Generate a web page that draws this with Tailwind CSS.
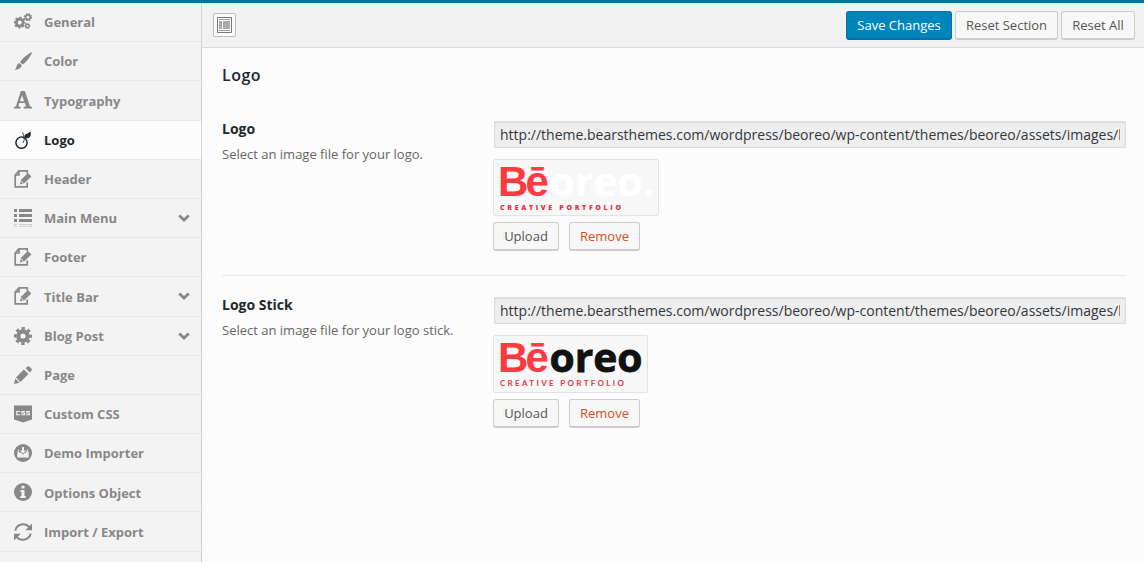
<!DOCTYPE html>
<html lang="en">
<head>
<meta charset="utf-8">
<title>Theme Options</title>
<script src="https://cdn.jsdelivr.net/npm/@tailwindcss/browser@4"></script>
</head>
<body class="h-[562px] overflow-hidden bg-[#fcfcfc] font-['Open_Sans',sans-serif] text-[13px] text-[#555]">
<svg class="hidden">
  <symbol id="edit" viewBox="0 0 18 18"><path d="M13.200 3.500V.9H5L1.200 5V16.900H13.200V12.500M5 1V5H1.200" fill="none" stroke="currentColor" stroke-width="1.700"/><path d="M5.800 14.400L7.300 9.400 14 3 17.400 6.600 10.600 13Z" fill="currentColor"/><path d="M7.400 11.200L9.200 12.800" stroke="#f3f3f3" stroke-width="1"/></symbol>
  <symbol id="chev" viewBox="0 0 12 8"><path d="M1.200 1.400L6 6 10.800 1.400" fill="none" stroke="currentColor" stroke-width="2.800"/></symbol>
</svg>
<div class="flex h-full flex-col border-t-[3px] border-[#0074a2]">
  <div class="flex min-h-0 flex-1">
    <nav class="w-[202px] shrink-0 border-r border-[#d3d3d3] bg-[#f3f3f3] font-bold text-[#888]">
      <a class="flex h-[39.2px] items-center border-b border-[#e7e7e7] pl-[14px]"><svg class="mr-3 size-[18px] shrink-0" viewBox="0 0 18 18" fill="none" stroke="currentColor"><circle cx="5.700" cy="9.600" r="3.400" stroke-width="2.700"/><circle cx="5.700" cy="9.600" r="5.100" stroke-width="1.700" stroke-dasharray="2.300 1.705" stroke-dashoffset="1.150"/><circle cx="13.900" cy="4.200" r="2.300" stroke-width="1.700"/><circle cx="13.900" cy="4.200" r="3.500" stroke-width="1.300" stroke-dasharray="1.600 1.149"/><circle cx="13.400" cy="13" r="1.700" stroke-width="1.400"/><circle cx="13.400" cy="13" r="2.500" stroke-width="1" stroke-dasharray="1.200 .763"/></svg><span class="pt-[2px]">General</span></a>
      <a class="flex h-[39.2px] items-center border-b border-[#e7e7e7] pl-[14px]"><svg class="mr-3 size-[18px] shrink-0" viewBox="0 0 18 18" fill="currentColor"><path d="M17.800 .2C18.200 .9 17 3.200 15 6 13.200 8.500 10.500 11.500 8.600 12.600L6 10.300C7.600 7.600 10.500 4.900 13 3 15.300 1.200 17.200 .1 17.800 .2Z"/><path d="M5.300 11L7.800 13.300C7.300 15.800 4.500 18 .2 18 2 16.800 2.100 15.800 2.600 14.200 3.100 12.600 4 11.300 5.300 11Z"/></svg><span class="pt-px">Color</span></a>
      <a class="flex h-[39.2px] items-center border-b border-[#e7e7e7] pl-[14px]"><svg class="mr-3 size-[18px] shrink-0" viewBox="0 0 18 18" fill="currentColor" fill-rule="evenodd"><path d="M6.900 0H10.900L16 15.200 18 16V17.500H9.700V16L11.900 15.300 10.900 12H5.300L4.400 15.300 6.600 16V17.500H0V16L2 15.200ZM8 4.200L5.900 10.300H10.200Z"/></svg><span class="pt-[2px]">Typography</span></a>
      <a class="flex h-[39.2px] items-center border-b border-[#e7e7e7] bg-[#fcfcfc] pl-[14px] text-[#23282d]"><svg class="mr-3 size-[18px] shrink-0" viewBox="0 0 18 18" fill="none" stroke="currentColor"><circle cx="7.500" cy="11.700" r="5.600" stroke-width="1.500"/><path d="M8.200 1.200C9.300 2.500 9.700 4 9.800 6L10.200 8.500C10.300 9.900 9.300 10.600 8.900 12" stroke-width=".9"/><path d="M10.400 6C10.300 3.100 12.500 3.100 14.100 2.200 15.400 1.400 16 .7 16.400 .5 17.200 2.500 17 5.200 15.400 6.500 13.600 7.800 11.500 7.200 10.400 6Z" fill="currentColor" stroke="none"/></svg><span class="pt-[2px]">Logo</span></a>
      <a class="flex h-[39.2px] items-center border-b border-[#e7e7e7] pl-[14px]"><svg class="mr-3 size-[18px] shrink-0"><use href="#edit"/></svg><span class="pt-[2px]">Header</span></a>
      <a class="flex h-[39.2px] items-center border-b border-[#e7e7e7] pl-[14px]"><svg class="mr-3 size-[18px] shrink-0" viewBox="0 0 18 18" fill="currentColor"><path d="M0 0H3V3H0ZM5 0H18V3H5ZM0 5H3V8H0ZM5 5H18V8H5ZM0 10H3V13H0ZM5 10H18V13H5Z"/><path d="M0 15H3V17.800H0ZM5 15H18V17.800H5Z" opacity=".35"/><path d="M1 16.400H17" stroke="#f3f3f3"/></svg><span class="pt-[2px]">Main Menu</span><svg class="mr-[11px] ml-auto h-2 w-3"><use href="#chev"/></svg></a>
      <a class="flex h-[39.2px] items-center border-b border-[#e7e7e7] pl-[14px]"><svg class="mr-3 size-[18px] shrink-0"><use href="#edit"/></svg><span class="pt-[2px]">Footer</span></a>
      <a class="flex h-[39.2px] items-center border-b border-[#e7e7e7] pl-[14px]"><svg class="mr-3 size-[18px] shrink-0"><use href="#edit"/></svg><span class="pt-[2px]">Title Bar</span><svg class="mr-[11px] ml-auto h-2 w-3"><use href="#chev"/></svg></a>
      <a class="flex h-[39.2px] items-center border-b border-[#e7e7e7] pl-[14px]"><svg class="mr-3 size-[18px] shrink-0" viewBox="0 0 18 18" fill="none" stroke="currentColor"><circle cx="9" cy="9" r="4.700" stroke-width="4.200"/><circle cx="9" cy="9" r="7.700" stroke-width="2.600" stroke-dasharray="3.400 2.648" stroke-dashoffset="1.700"/></svg><span class="pt-[2px]">Blog Post</span><svg class="mr-[11px] ml-auto h-2 w-3"><use href="#chev"/></svg></a>
      <a class="flex h-[39.2px] items-center border-b border-[#e7e7e7] pl-[14px]"><svg class="mr-3 size-[18px] shrink-0" viewBox="0 0 18 18" fill="currentColor"><path d="M0 18L1.300 12.500 5.500 16.700ZM2 11.500L9.900 3.600 14.400 8.100 6.500 16ZM11.600 2.200L13.200 .7C14 0 14.800 0 15.600 .7L17.300 2.400C18.100 3.200 18.100 4 17.400 4.800L15.800 6.400Z"/></svg><span class="pt-[2px]">Page</span></a>
      <a class="flex h-[39.2px] items-center border-b border-[#e7e7e7] pl-[14px]"><svg class="mr-3 size-[18px] shrink-0" viewBox="0 0 18 18"><path d="M0 .5H18V14.500L9 17.500 0 14.500Z" fill="currentColor"/><path d="M6 6.500H2.700V9.700H6M10.800 6.500H7.800V8H10.500V9.700H7.300M15.800 6.500H12.700V8H15.400V9.700H12.200" fill="none" stroke="#f3f3f3" stroke-width="1.100"/></svg><span class="pt-[2px]">Custom CSS</span></a>
      <a class="flex h-[39.2px] items-center border-b border-[#e7e7e7] pl-[14px]"><svg class="mr-3 size-[18px] shrink-0" viewBox="0 0 18 18"><circle cx="9" cy="9" r="9" fill="currentColor"/><path d="M8 3H10V6.500H12L9 9.500 6 6.500H8ZM5 4.500L3.300 8.500V13.500H14.700V8.500L13 4.500 12.500 8.500H11L9 10.700 7 8.500H4.700Z" fill="#f3f3f3"/></svg><span class="pt-[2px]">Demo Importer</span></a>
      <a class="flex h-[39.2px] items-center border-b border-[#e7e7e7] pl-[14px]"><svg class="mr-3 size-[18px] shrink-0" viewBox="0 0 18 18"><circle cx="9" cy="9" r="9" fill="currentColor"/><path d="M7.500 2.800H10.500V5.500H7.500ZM6.500 7H10.500V13H11.700V15H6.300V13H7.500V9H6.500Z" fill="#f3f3f3"/></svg><span class="pt-[2px]">Options Object</span></a>
      <a class="flex h-[39.2px] items-center border-b border-[#e7e7e7] pl-[14px]"><svg class="mr-3 size-[18px] shrink-0" viewBox="0 0 18 18"><path d="M1.200 7.500C3 .8 11 -.8 15.500 4.200M16.800 10.500C15 17.200 7 18.800 2.500 13.800" fill="none" stroke="currentColor" stroke-width="2"/><path d="M18 .5V7.300H11.200ZM0 17.500V10.700H6.800Z" fill="currentColor"/></svg><span class="pt-[2px]">Import / Export</span></a>
    </nav>
    <main class="min-w-0 flex-1">
      <header class="flex h-[45px] items-center border-b border-[#dcdcdc] bg-[#f2f2f2] pr-[9px] pl-[11px]">
        <button class="flex h-6 w-[23px] items-center justify-center rounded-[2px] border border-[#bbb] bg-[#fafafa]"><svg class="h-4 w-[15px]" viewBox="0 0 15 16"><path d="M.5 .5H14.500V15.500H.5Z" fill="#fff" stroke="#777"/><path d="M2 2.500H13M2 13.500H13" stroke="#999"/><path d="M2 4H5V12H2ZM6 4H13V12H6Z" fill="#aaa"/></svg></button>
        <div class="ml-auto flex gap-[3px]">
          <button class="h-[29px] w-[106px] rounded-[3px] border border-b-2 border-[#0073aa] bg-[#0085ba] pt-[2px] text-white">Save Changes</button>
          <button class="h-[29px] w-[103px] rounded-[3px] border border-b-2 border-[#ccc] bg-[#f7f7f7] pt-[2px]">Reset Section</button>
          <button class="h-[29px] w-[74px] rounded-[3px] border border-b-2 border-[#ccc] bg-[#f7f7f7] pt-[2px]">Reset All</button>
        </div>
      </header>
      <div class="pr-[18px] pl-5">
        <h1 class="pt-[15px] text-base leading-6 font-semibold tracking-[0.5px] text-[#23282d]">Logo</h1>
        <section class="flex h-[189px] border-b border-[#e7e7e7] pt-[34px]">
          <div class="w-[271px] shrink-0">
            <h2 class="text-sm leading-4 font-bold text-[#23282d]">Logo</h2>
            <p class="mt-2 leading-[18px] text-[#666]">Select an image file for your logo.</p>
          </div>
          <div class="min-w-0 flex-1">
            <div class="ml-px h-[27px] border border-[#ddd] bg-[#eee] px-[5px] shadow-[inset_0_1px_2px_rgba(0,0,0,0.07)]"><div class="overflow-hidden text-sm leading-[25px] whitespace-nowrap text-[#32373c]">http://theme.bearsthemes.com/wordpress/beoreo/wp-content/themes/beoreo/assets/images/logo.png</div></div>
            <div class="mt-[11px] h-[57px] w-[166px] rounded-[2px] border border-[#e3e3e3] bg-[#f7f7f7]">
              <svg class="h-[55px] w-[164px]" viewBox="494 160 164 55"><text x="498 525.500" y="195.500" font-family="Liberation Sans" font-weight="700" font-size="42" fill="#fb3a42">Bē</text><text x="549.500" y="195.500" font-family="Open Sans" font-weight="700" font-size="40" textLength="105" lengthAdjust="spacingAndGlyphs" fill="#fff" stroke="#fff" stroke-width=".5">oreo.</text><text x="500" y="210" font-family="Open Sans" font-weight="800" font-size="7" textLength="121" fill="#dc3545">CREATIVE PORTFOLIO</text></svg>
            </div>
            <div class="mt-[6px] flex gap-[10px]"><button class="h-[29px] w-[66px] rounded-[3px] border border-b-2 border-[#ccc] bg-[#f7f7f7] pt-[2px]">Upload</button><button class="h-[29px] w-[71px] rounded-[3px] border border-b-2 border-[#ccc] bg-[#f7f7f7] pt-[2px] text-[#d54e21]">Remove</button></div>
          </div>
        </section>
        <section class="flex pt-[21px]">
          <div class="w-[271px] shrink-0">
            <h2 class="text-sm leading-4 font-bold text-[#23282d]">Logo Stick</h2>
            <p class="mt-2 leading-[18px] text-[#666]">Select an image file for your logo stick.</p>
          </div>
          <div class="min-w-0 flex-1">
            <div class="ml-px h-[27px] border border-[#ddd] bg-[#eee] px-[5px] shadow-[inset_0_1px_2px_rgba(0,0,0,0.07)]"><div class="overflow-hidden text-sm leading-[25px] whitespace-nowrap text-[#32373c]">http://theme.bearsthemes.com/wordpress/beoreo/wp-content/themes/beoreo/assets/images/logo.png</div></div>
            <div class="mt-[11px] h-[58px] w-[155px] rounded-[2px] border border-[#e3e3e3] bg-[#f7f7f7]">
              <svg class="h-[56px] w-[153px]" viewBox="494 336 153 56"><text x="498 525.500" y="371.500" font-family="Liberation Sans" font-weight="700" font-size="42" fill="#fb3a42">Bē</text><text x="549.500" y="372" font-family="Open Sans" font-weight="700" font-size="40" textLength="93" lengthAdjust="spacingAndGlyphs" fill="#111" stroke="#111" stroke-width=".8">oreo</text><text x="500" y="386" font-family="Lato" font-weight="700" font-size="8" textLength="124" fill="#dc3545">CREATIVE PORTFOLIO</text></svg>
            </div>
            <div class="mt-[6px] flex gap-[10px]"><button class="h-[29px] w-[66px] rounded-[3px] border border-b-2 border-[#ccc] bg-[#f7f7f7] pt-[2px]">Upload</button><button class="h-[29px] w-[71px] rounded-[3px] border border-b-2 border-[#ccc] bg-[#f7f7f7] pt-[2px] text-[#d54e21]">Remove</button></div>
          </div>
        </section>
      </div>
    </main>
  </div>
</div>
</body>
</html>
